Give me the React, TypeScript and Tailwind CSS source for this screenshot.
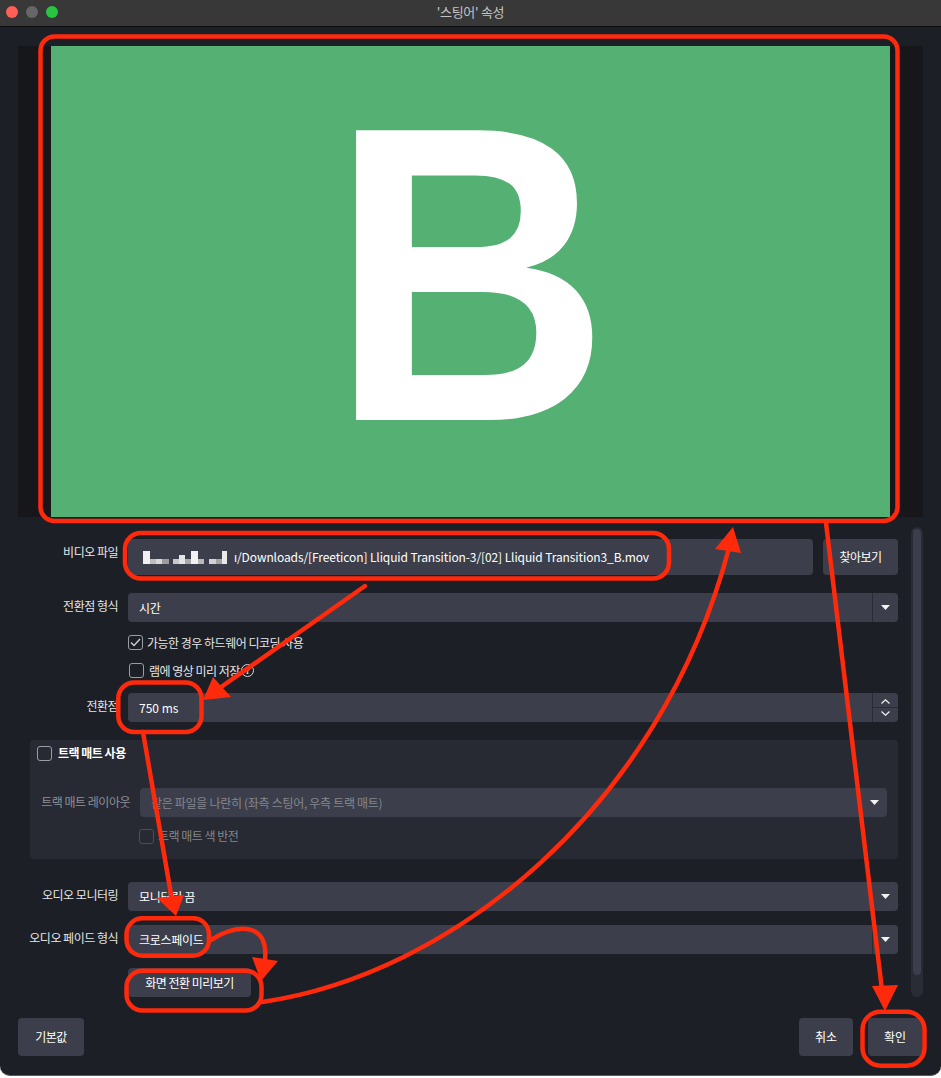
import React from 'react'

const KR = "font-['Noto_Sans_CJK_KR','Noto_Sans',sans-serif]"

function Caret({ color = '#f2f2f2' }: { color?: string }) {
  return (
    <svg width="9" height="5" viewBox="0 0 9 5">
      <path d="M0 0h9L4.5 5z" fill={color} />
    </svg>
  )
}

function Label({ children }: { children: React.ReactNode }) {
  return (
    <div className="flex h-[29px] w-[100px] shrink-0 items-center justify-end pb-[4px] text-[12px] tracking-[-0.5px] text-[#e6e6e6]">
      {children}
    </div>
  )
}

function Select({ value, divider = true }: { value: string; divider?: boolean }) {
  return (
    <div className="flex h-[29px] flex-1 items-center rounded-[4px] bg-[#3c3f4b]">
      <span className="flex-1 pl-[11px] text-[12px] tracking-[-0.3px] text-white">{value}</span>
      <div
        className={`flex h-full w-[26px] items-center justify-center ${divider ? 'border-l border-[#2a2c34]' : ''}`}
      >
        <Caret />
      </div>
    </div>
  )
}

function Checkbox({ checked = false, dim = false }: { checked?: boolean; dim?: boolean }) {
  return (
    <div
      className={`flex h-[15px] w-[15px] shrink-0 items-center justify-center rounded-[3px] border-[1.5px] ${
        dim ? 'border-[#4b4e57]' : 'border-[#9b9da4]'
      }`}
    >
      {checked && (
        <svg width="11" height="9" viewBox="0 0 11 9" fill="none">
          <path d="M1 4.5L4 7.5L10 1" stroke="#cfd0d3" strokeWidth="1.4" />
        </svg>
      )}
    </div>
  )
}

// pixelated part of the file path
const blocks: [number, number, number, string][] = [
  [0, 7, 13, '#f0f0f0'],
  [7, 6, 5, '#bdbdbd'],
  [13, 6, 5, '#d8d8d8'],
  [19, 7, 5, '#9c9c9c'],
  [30, 6, 5, '#c9c9c9'],
  [36, 6, 9, '#e4e4e4'],
  [42, 6, 5, '#a8a8a8'],
  [48, 7, 13, '#f2f2f2'],
  [55, 6, 5, '#b8b8b8'],
  [66, 7, 5, '#d2d2d2'],
  [73, 6, 5, '#a4a4a4'],
  [79, 5, 13, '#e9e9e9'],
]

export default function App() {
  return (
    <div className={`h-[1078px] w-[941px] bg-white ${KR}`}>
      <div className="relative flex h-[1076px] w-[941px] flex-col overflow-hidden rounded-b-[10px] border-b border-[#5a5a5a] bg-[#1d1f26]">
        {/* Title bar */}
        <div className="relative flex h-[27px] shrink-0 items-center justify-center border-b border-[#0c0c0c] bg-[#383838]">
          <div className="absolute left-[6px] top-[6px] flex gap-[8px]">
            <div className="h-[12px] w-[12px] rounded-full bg-[#fe5f57]" />
            <div className="h-[12px] w-[12px] rounded-full bg-[#666666]" />
            <div className="h-[12px] w-[12px] rounded-full bg-[#29c440]" />
          </div>
          <span className="pb-[2px] text-[13px] tracking-[-0.3px] text-[#c4c4c4]">'스팅어' 속성</span>
        </div>

        {/* Preview */}
        <div className="mx-[18px] mt-[19px] flex h-[471px] shrink-0 justify-center bg-[#16161b]">
          <div className="flex w-[839px] items-center justify-center bg-[#54b173] pb-[15px]">
            <span className="inline-block scale-x-[0.92] font-['Liberation_Sans',Arial,sans-serif] text-[421px] font-bold leading-none text-white">
              B
            </span>
          </div>
        </div>

        {/* Form + scrollbar */}
        <div className="mt-[10px] flex h-[470px] shrink-0">
          <div className="ml-[18px] flex w-[880px] flex-col pt-[12px]">
            {/* Video file */}
            <div className="flex gap-[10px]">
              <Label>비디오 파일</Label>
              <div className="flex h-[36px] flex-1 items-center overflow-hidden rounded-[4px] bg-[#3c3f4b] pl-[15px]">
                <div className="relative mr-[4px] h-[13px] w-[87px] shrink-0">
                  {blocks.map(([x, w, h, c], i) => (
                    <div
                      key={i}
                      className="absolute bottom-0"
                      style={{ left: x, width: w, height: h, background: c }}
                    />
                  ))}
                </div>
                <span className="whitespace-nowrap text-[12px] tracking-[-0.1px] text-white">
                  ı/Downloads/[Freeticon] Lliquid Transition-3/[02] Lliquid Transition3_B.mov
                </span>
              </div>
              <div className="flex h-[36px] w-[75px] items-center justify-center rounded-[4px] bg-[#3c3f4b] text-[12px] tracking-[-0.5px] text-white">
                찾아보기
              </div>
            </div>

            {/* Transition point type */}
            <div className="mt-[18px] flex gap-[10px]">
              <Label>전환점 형식</Label>
              <Select value="시간" />
            </div>

            <div className="mt-[12px] flex h-[17px] items-center gap-[4px] pl-[110px] text-[12px] tracking-[-0.5px] text-[#e6e6e6]">
              <Checkbox checked />
              <span>가능한 경우 하드웨어 디코딩 사용</span>
            </div>
            <div className="mt-[11px] flex h-[17px] items-center gap-[5px] pl-[111px] text-[12px] tracking-[-0.5px] text-[#e6e6e6]">
              <Checkbox />
              <span>램에 영상 미리 저장</span>
              <div className="-ml-[4px] flex h-[13px] w-[13px] items-center justify-center rounded-full border border-[#d8d8d8] text-[9px] font-bold leading-none text-[#e6e6e6]">
                ?
              </div>
            </div>

            {/* Transition point */}
            <div className="mt-[14px] flex gap-[10px]">
              <Label>전환점</Label>
              <div className="flex h-[29px] flex-1 items-center rounded-[4px] bg-[#3c3f4b]">
                <span className="flex-1 pl-[11px] text-[12px] text-white">750 ms</span>
                <div className="flex h-full w-[26px] flex-col border-l border-[#2a2c34]">
                  <div className="flex flex-1 items-end justify-center border-b border-[#2a2c34] pb-[3px]">
                    <svg width="9" height="5" viewBox="0 0 9 5" fill="none">
                      <path d="M0.5 4.5L4.5 0.8L8.5 4.5" stroke="#f2f2f2" strokeWidth="1.2" />
                    </svg>
                  </div>
                  <div className="flex flex-1 items-start justify-center pt-[3px]">
                    <svg width="9" height="5" viewBox="0 0 9 5" fill="none">
                      <path d="M0.5 0.5L4.5 4.2L8.5 0.5" stroke="#f2f2f2" strokeWidth="1.2" />
                    </svg>
                  </div>
                </div>
              </div>
            </div>

            {/* Track matte group */}
            <div className="ml-[12px] mt-[18px] flex h-[119px] w-[868px] flex-col rounded-[4px] bg-[#272a33]">
              <div className="mt-[4px] flex items-center gap-[6px] pl-[7px]">
                <Checkbox />
                <span className="text-[12px] font-bold tracking-[-0.5px] text-white">트랙 매트 사용</span>
              </div>
              <div className="mt-[26px] flex items-center gap-[10px]">
                <div className="w-[100px] shrink-0 pb-[2px] text-right text-[12px] tracking-[-0.5px] text-[#8e9097]">
                  트랙 매트 레이아웃
                </div>
                <div className="mr-[11px] flex h-[29px] flex-1 items-center rounded-[4px] bg-[#3c3f4b]">
                  <span className="flex-1 pl-[11px] text-[12px] tracking-[-0.3px] text-[#85878e]">
                    같은 파일을 나란히 (좌측 스팅어, 우측 트랙 매트)
                  </span>
                  <div className="flex h-full w-[26px] items-center justify-center">
                    <Caret />
                  </div>
                </div>
              </div>
              <div className="mt-[10px] flex items-center gap-[4px] pl-[109px] text-[12px] tracking-[-0.5px] text-[#85878e]">
                <Checkbox dim />
                <span>트랙 매트 색 반전</span>
              </div>
            </div>

            {/* Audio monitoring */}
            <div className="mt-[23px] flex gap-[10px]">
              <Label>오디오 모니터링</Label>
              <Select value="모니터링 끔" divider={false} />
            </div>
            <div className="mt-[14px] flex gap-[10px]">
              <Label>오디오 페이드 형식</Label>
              <Select value="크로스페이드" />
            </div>
            <div className="mt-[14px] flex gap-[10px]">
              <div className="w-[100px] shrink-0" />
              <div className="flex h-[29px] w-[123px] items-center justify-center rounded-[4px] bg-[#3c3f4b] text-[12px] tracking-[-0.5px] text-white">
                화면 전환 미리보기
              </div>
            </div>
          </div>

          {/* Scrollbar */}
          <div className="ml-[13px] h-[470px] w-[12px] rounded-[6px] bg-[#2a2c35] p-[2px]">
            <div className="h-[446px] w-full rounded-[4px] bg-[#3c3f4b]" />
          </div>
        </div>

        {/* Bottom buttons */}
        <div className="mt-[21px] flex items-center justify-between pl-[18px] pr-[19px]">
          <div className="flex h-[38px] w-[66px] items-center justify-center rounded-[4px] bg-[#3c3f4b] text-[12px] tracking-[-0.5px] text-white">
            기본값
          </div>
          <div className="flex gap-[15px]">
            <div className="flex h-[38px] w-[54px] items-center justify-center rounded-[4px] bg-[#3c3f4b] text-[12px] text-white">
              취소
            </div>
            <div className="flex h-[38px] w-[54px] items-center justify-center rounded-[4px] bg-[#3c3f4b] text-[12px] text-white">
              확인
            </div>
          </div>
        </div>

        {/* Red annotations */}
        <svg
          className="pointer-events-none absolute left-0 top-0"
          width="941"
          height="1078"
          viewBox="0 0 941 1078"
          fill="none"
        >
          <g stroke="#ff2a0c" strokeWidth="4.5" strokeLinecap="round" fill="none">
            <rect x="40.5" y="36.5" width="857" height="484.5" rx="14" />
            <rect x="125" y="533" width="544" height="45.5" rx="16" />
            <rect x="118.3" y="682.5" width="83.2" height="49.5" rx="16" />
            <rect x="126.5" y="918.3" width="82.5" height="37.4" rx="16" />
            <rect x="126.5" y="970.8" width="135" height="39.7" rx="16" />
            <rect x="862.5" y="1011.7" width="62" height="54" rx="18" />
            <path d="M365 586 L214 692" />
            <path d="M143 732 L172 900" />
            <path d="M211 940 C 236 924, 269 921, 265 960" />
            <path d="M262 1002 C 450 975, 660 810, 729 548" />
            <path d="M826 523 L 882 990" />
          </g>
          <g fill="#ff2a0c">
            <polygon points="203,700 213,677 231,697" />
            <polygon points="176,916 157,898 184,895" />
            <polygon points="261,981 252,957 278,961" />
            <polygon points="733,527 715,549 741,553" />
            <polygon points="885,1011 872,986 898,985" />
          </g>
        </svg>
      </div>
    </div>
  )
}
